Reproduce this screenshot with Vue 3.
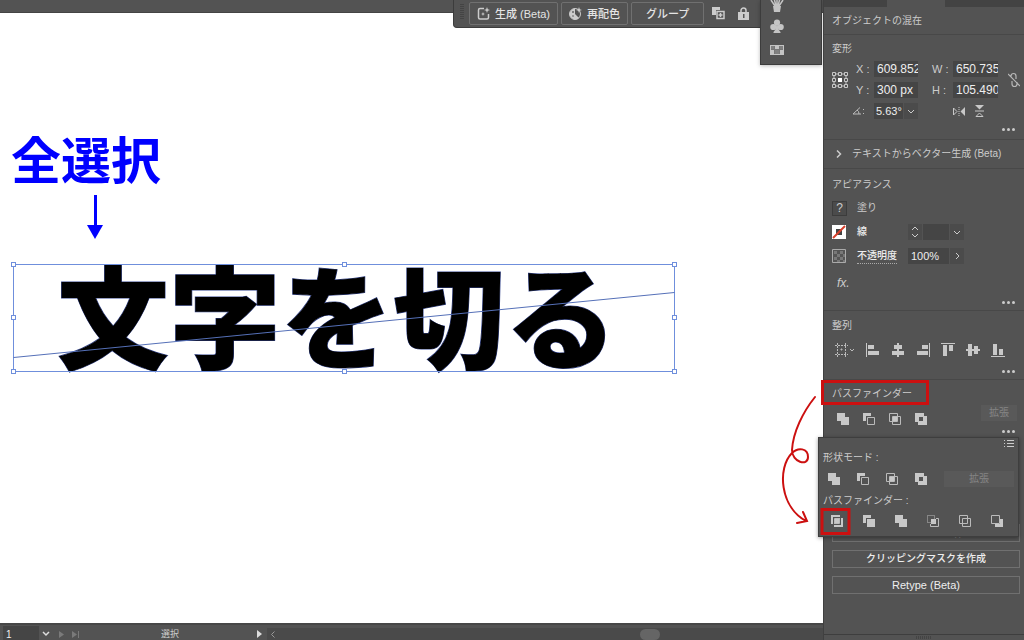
<script setup>
import { ref } from 'vue'

const x = ref('609.852')
const y = ref('300 px')
const w = ref('650.735')
const h = ref('105.490')
const angle = ref('5.63°')
const opacity = ref('100%')
const stroke = ref('')
const artboard = ref('1')

const handles = [[1, 1], [332, 1], [662, 1], [1, 54], [662, 54], [1, 108], [332, 108], [662, 108]]

const unite = { name: '合体', fill: 'M0 0h8v4h4v8H4V8H0z' }
const minusFront = { name: '前面オブジェクトで型抜き', fill: 'M0 0h8v3H3v5H0z', line: 'M4.5 4.5h7v7h-7z' }
const intersect = { name: '交差', fill: 'M4 4h4v4H4z', line: 'M.5 .5h8v8h-8zM3.5 3.5h8v8h-8z' }
const exclude = { name: '中マド', fill: 'M0 0h9v3h3v9H3V9H0zM4 4v4h4V4z' }
const shapeModes = [unite, minusFront, intersect, exclude]
const pathfinders = [
  { name: '分割', fill: 'M0 0h9v2H2v7H0zM4 4h4v4H4zM10 3h2v9H3v-2h7z', line: 'M3.5 9V3.5H9M8.5 3v5.500H3' },
  { name: '刈り込み', fill: 'M0 0h8v3H3v5H0zM4 4h8v8H4z' },
  { name: '合流', fill: 'M0 0h8v4h4v8H4V8H0z' },
  { name: '切り抜き', fill: 'M4 4h5v5H4z', dotted: 'M.5 .5h7v7h-7z', line: 'M9 3.5h2.500v8h-8V9' },
  { name: 'アウトライン', line: 'M.5 .5h8v8h-8zM3.5 3.5h8v8h-8z' },
  { name: '背面オブジェクトで型抜き', fill: 'M9 4h3v8H4V9h5z', line: 'M.5 .5h8v8h-8z' },
]
const aligns = [
  { name: '左揃え', d: 'M0 0h1v14H0zM2 2h6v4H2zM2 8h11v4H2z' },
  { name: '水平方向中央', d: 'M6 0h2v14H6zM3 2h8v4H3zM1 8h12v4H1z' },
  { name: '右揃え', d: 'M13 0h1v14h-1zM6 2h6v4H6zM1 8h11v4H1z' },
  { name: '上揃え', d: 'M0 0h14v1H0zM2 2h4v11H2zM8 2h4v6H8z' },
  { name: '垂直方向中央', d: 'M0 6h14v2H0zM2 1h4v12H2zM8 3h4v8H8z' },
  { name: '下揃え', d: 'M0 13h14v1H0zM2 1h4v11H2zM8 6h4v6H8z' },
]
</script>

<template>
  <div class="app">
    <main>
      <div class="topstrip"></div>
      <div class="canvas">
        <h1 class="note">全選択</h1>
        <svg class="down" width="16" height="44" viewBox="0 0 16 44">
          <path d="M8.500 0v32" stroke="#00f" stroke-width="3" />
          <path d="M0 30h16L8 44z" fill="#00f" />
        </svg>
        <p class="art">文字を切る</p>
        <svg class="selection" width="668" height="114" viewBox="0 0 668 114">
          <g fill="none" stroke="#6f8fdc">
            <path d="M3.500 3.500h661v107h-661z" />
            <path d="M3.500 96.500L664.500 31.500" stroke="#5570b8" />
          </g>
          <g fill="#fff" stroke="#6f8fdc">
            <rect v-for="p in handles" :key="p.join()" :x="p[0] + 0.5" :y="p[1] + 0.5" width="4" height="4" />
          </g>
        </svg>
      </div>

      <div class="taskbar">
        <i class="grip"></i>
        <button>
          <svg width="13" height="13" viewBox="0 0 13 13" fill="none" stroke="#ccc">
            <path d="M7 1.500H3Q1.500 1.500 1.500 3v7.500Q1.500 12 3 12h7q1.500 0 1.500-1.500V7" stroke-width="1.500" />
            <path d="M10 0l.8 2.200L13 3l-2.200.8L10 6l-.8-2.200L7 3l2.200-.8zM6 5l.6 1.400L8 7l-1.400.6L6 9l-.6-1.400L4 7l1.400-.6z" fill="#ccc" stroke="none" />
          </svg>
          生成 (Beta)
        </button>
        <button>
          <svg width="13" height="13" viewBox="0 0 13 13">
            <circle cx="6" cy="7" r="5.500" fill="none" stroke="#ccc" />
            <path d="M6 1.500a5.500 5.500 0 1 0 4 9.500L6 7z" fill="#ccc" />
            <circle cx="4" cy="5" r="1" fill="#666" /><circle cx="4" cy="9" r="1" fill="#888" />
            <path d="M10 0l.8 2.200L13 3l-2.200.8L10 6l-.8-2.200L7 3l2.200-.8z" fill="#ccc" />
          </svg>
          再配色
        </button>
        <button class="plain">グループ</button>
        <button class="ico" aria-label="複製">
          <svg width="13" height="13" viewBox="0 0 13 13">
            <path d="M0 0h8v3H4v5H0z" fill="#ccc" />
            <path d="M5 4.500h7v7H5zM8.500 6v4M6.500 8h4" fill="none" stroke="#ccc" stroke-width="1.500" />
          </svg>
        </button>
        <button class="ico" aria-label="ロック">
          <svg width="11" height="13" viewBox="0 0 11 13">
            <path d="M3 6V3.500a2.500 2.500 0 0 1 5 0V6" fill="none" stroke="#ccc" stroke-width="1.500" />
            <path d="M0 5h11v8H0z" fill="#ccc" />
            <path d="M5 7h1.500v4H5z" fill="#555" />
          </svg>
        </button>
      </div>

      <div class="dock">
        <svg width="14" height="12" viewBox="0 2 14 12" fill="#c4c4c4">
          <path d="M3 8h8l-1 6H4z" />
          <path d="M5 8L1 2M6 8L4 0M7 8V1M8 8l2-8M9 8l4-6" stroke="#c4c4c4" stroke-width="1.500" />
        </svg>
        <svg width="14" height="14" viewBox="0 0 14 14" fill="#c4c4c4">
          <circle cx="7" cy="3.500" r="3.100" /><circle cx="3.300" cy="8" r="3.100" /><circle cx="10.700" cy="8" r="3.100" />
          <path d="M6.300 5h1.400q0 5 2.800 8v1h-7v-1Q6.300 10 6.300 5z" />
        </svg>
        <svg width="14" height="10" viewBox="0 0 14 10">
          <path d="M0 0h14v10H0z" fill="#c4c4c4" />
          <path d="M1 1h3v3H1zM10 1h3v3h-3zM5 5h4v4H5z" fill="#808080" />
          <path d="M4.500 1v8M9.500 1v8M1 4.500h12" stroke="#777" />
        </svg>
      </div>

      <footer>
        <label class="page"><input v-model="artboard" aria-label="アートボード" /></label>
        <button aria-label="アートボード一覧"><svg width="8" height="6" viewBox="0 0 8 6"><path d="M1 1l3 3 3-3" fill="none" stroke="#ddd" stroke-width="1.500" /></svg></button>
        <button class="next" aria-label="次へ"><svg width="5" height="7" viewBox="0 0 5 7"><path d="M0 0l5 3.500L0 7z" fill="#7a7a7a" /></svg></button>
        <button class="last" aria-label="最後へ"><svg width="7" height="7" viewBox="0 0 7 7"><path d="M0 0l5 3.500L0 7zM6 0h1v7H6z" fill="#7a7a7a" /></svg></button>
        <span class="tool">選択</span>
        <button aria-label="表示"><svg width="5" height="8" viewBox="0 0 5 8"><path d="M0 0l5 4-5 4z" fill="#ddd" /></svg></button>
        <div class="scroll">
          <svg width="4" height="7" viewBox="0 0 4 7"><path d="M3.500 .5l-3 3 3 3" fill="none" stroke="#999" /></svg>
          <i></i>
        </div>
      </footer>
    </main>

    <aside>
      <div class="tabs"><i></i></div>
      <h2 class="title">オブジェクトの混在</h2>

      <section class="transform">
        <h3>変形</h3>
        <div class="fields">
          <svg class="ref" width="16" height="16" viewBox="0 0 16 16" fill="none" stroke="#c8c8c8">
            <path d="M4 2h2M10 2h2M4 14h2M10 14h2M2 4v2M2 10v2M14 4v2M14 10v2" />
            <path d="M.5 .5h3v3h-3zM6.500 .5h3v3h-3zM12.500 .5h3v3h-3zM.5 6.500h3v3h-3zM12.500 6.500h3v3h-3zM.5 12.500h3v3h-3zM6.500 12.500h3v3h-3zM12.500 12.500h3v3h-3z" />
            <path d="M6 6h4v4H6z" fill="#fff" stroke="none" />
          </svg>
          <label for="fx">X :</label><input id="fx" v-model="x" />
          <label for="fw">W :</label><input id="fw" v-model="w" />
          <svg class="link" width="12" height="16" viewBox="0 0 12 16" fill="none" stroke="#b8b8b8" stroke-width="1.200">
            <path d="M3 6V4a2.500 2.500 0 0 1 5 0v3M4 9v3a2.500 2.500 0 0 0 5 0v-2M0 2l12 12" />
          </svg>
          <label for="fy">Y :</label><input id="fy" v-model="y" />
          <label for="fh">H :</label><input id="fh" v-model="h" />
          <label for="fa" aria-label="角度"><svg width="13" height="8" viewBox="0 0 13 8" fill="none" stroke="#bbb"><path d="M8 .5L1 7h8M5 3q2 1 2 4" /><path d="M11.500 2v1M11.500 6v1" /></svg></label>
          <div class="combo">
            <input id="fa" v-model="angle" />
            <button aria-label="角度を選択"><svg width="8" height="5" viewBox="0 0 8 5"><path d="M1 1l3 3 3-3" fill="none" stroke="#ccc" /></svg></button>
          </div>
          <div class="flip">
            <button aria-label="水平方向に反転"><svg width="12" height="9" viewBox="0 0 12 9"><path d="M.5 1v7L4 4.500z" fill="none" stroke="#c8c8c8" /><path d="M12 0v9L7.500 4.500z" fill="#c8c8c8" /><path d="M6 0v9" stroke="#c8c8c8" stroke-dasharray="1 1" /></svg></button>
            <button aria-label="垂直方向に反転"><svg width="9" height="12" viewBox="0 0 9 12"><path d="M0 0h9L4.500 4.500z" fill="#c8c8c8" /><path d="M1 11.500h7L4.500 8z" fill="none" stroke="#c8c8c8" /><path d="M0 6h9" stroke="#c8c8c8" /></svg></button>
          </div>
        </div>
        <button class="more" aria-label="詳細オプション"><i></i><i></i><i></i></button>
      </section>

      <section class="vector">
        <button>
          <svg width="6" height="8" viewBox="0 0 6 8"><path d="M1 .5L4.500 4 1 7.500" fill="none" stroke="#ccc" stroke-width="1.500" /></svg>
          テキストからベクター生成 (Beta)
        </button>
      </section>

      <section class="appearance">
        <h3>アピアランス</h3>
        <div class="row">
          <button class="unknown" aria-label="塗りの色">?</button>
          <span>塗り</span>
        </div>
        <div class="row">
          <svg width="14" height="14" viewBox="0 0 14 14"><path d="M0 0h14v14H0z" fill="#fff" /><path d="M4 4h6v6H4z" fill="#444" /><path d="M1 13L13 1" stroke="#d8402c" stroke-width="2" /></svg>
          <label class="strong" for="st">線</label>
          <div class="combo">
            <button aria-label="線幅の増減"><svg width="8" height="12" viewBox="0 0 8 12"><path d="M1 4l3-3 3 3M1 8l3 3 3-3" fill="none" stroke="#ccc" /></svg></button>
            <input id="st" v-model="stroke" />
            <button aria-label="線幅を選択"><svg width="8" height="5" viewBox="0 0 8 5"><path d="M1 1l3 3 3-3" fill="none" stroke="#ccc" /></svg></button>
          </div>
        </div>
        <div class="row">
          <svg width="14" height="14" viewBox="0 0 14 14"><path d="M.5 .5h13v13H.5z" fill="#555" stroke="#aaa" /><path d="M2 2h3v3H2zM8 2h3v3H8zM5 5h3v3H5zM11 5h2v3h-2zM2 8h3v3H2zM8 8h3v3H8zM5 11h3v2H5zM11 11h2v2h-2z" fill="#787878" /></svg>
          <label class="strong under" for="op">不透明度</label>
          <div class="combo wide">
            <input id="op" v-model="opacity" />
            <button aria-label="不透明度を変更"><svg width="5" height="8" viewBox="0 0 5 8"><path d="M1 1l3 3-3 3" fill="none" stroke="#ccc" /></svg></button>
          </div>
        </div>
        <button class="effect">fx.</button>
        <button class="more" aria-label="アピアランスパネル"><i></i><i></i><i></i></button>
      </section>

      <section class="align">
        <h3>整列</h3>
        <div class="icons">
          <button aria-label="整列の基準">
            <svg width="20" height="14" viewBox="0 0 20 14" fill="none" stroke="#bbb"><path d="M2.500 0v14M10.500 0v14M0 2.500h13M0 11.500h13" stroke-dasharray="2 1" /><path d="M6 6h1v1H6zM15 6l2 2 2-2" /></svg>
          </button>
          <button v-for="a in aligns" :key="a.name" :aria-label="a.name">
            <svg width="14" height="14" viewBox="0 0 14 14"><path :d="a.d" fill="#c8c8c8" /></svg>
          </button>
        </div>
        <button class="more" aria-label="整列パネル"><i></i><i></i><i></i></button>
      </section>

      <section class="pathfinder">
        <h3>パスファインダー</h3>
        <div class="icons">
          <button v-for="i in shapeModes" :key="i.name" :aria-label="i.name">
            <svg class="pf" width="12" height="12" viewBox="0 0 12 12"><path v-if="i.fill" class="fill" :d="i.fill" /><path v-if="i.line" class="line" :d="i.line" /></svg>
          </button>
          <button class="expand" disabled>拡張</button>
        </div>
        <button class="more" aria-label="パスファインダーパネル"><i></i><i></i><i></i></button>
      </section>

      <section class="quick">
        <button>オブジェクトを一括選択</button>
        <button>クリッピングマスクを作成</button>
        <button>Retype (Beta)</button>
      </section>
      <div class="handle"><i class="grip"></i></div>

      <div class="popup">
        <button class="menu" aria-label="パネルメニュー"><svg width="10" height="8" viewBox="0 0 10 8"><path d="M0 .5h1M3 .5h7M0 3.500h1M3 3.500h7M0 6.500h1M3 6.500h7" stroke="#ccc" /></svg></button>
        <h3>形状モード :</h3>
        <div class="icons modes">
          <button v-for="i in shapeModes" :key="i.name" :aria-label="i.name">
            <svg class="pf" width="12" height="12" viewBox="0 0 12 12"><path v-if="i.fill" class="fill" :d="i.fill" /><path v-if="i.line" class="line" :d="i.line" /></svg>
          </button>
          <button class="expand" disabled>拡張</button>
        </div>
        <h3>パスファインダー :</h3>
        <div class="icons finders">
          <button v-for="i in pathfinders" :key="i.name" :aria-label="i.name">
            <svg class="pf" width="12" height="12" viewBox="0 0 12 12"><path v-if="i.fill" class="fill" :d="i.fill" /><path v-if="i.line" class="line" :d="i.line" /><path v-if="i.dotted" class="line dotted" :d="i.dotted" /></svg>
          </button>
        </div>
      </div>

      <!-- red marks over the panel -->
      <svg class="marks" width="154" height="164" viewBox="776 376 154 164" fill="none" stroke="#cc1010">
        <path d="M822.500 381.500h105v22h-105zM822 509.500h27v24h-27z" stroke-width="3" />
        <path d="M815 397C803 412 793 432 792 450C792 462 808 467 808 457C808 448 798 447 792 453C777 468 780 507 806 521M803 512L807 521L797 523" stroke-width="2" stroke-linecap="round" />
      </svg>
    </aside>
  </div>
</template>

<style>
body {
  margin: 0;
}
</style>

<style scoped>
.app {
  display: flex;
  height: 100vh;
  overflow: hidden;
  background: #fff;
  color: #ccc;
  font: 10px/14px "Liberation Sans", "Noto Sans CJK JP", sans-serif;
}
h1, h2, h3, p {
  margin: 0;
  font-weight: 400;
}
h2, h3 {
  font-size: 10px;
}
button, input {
  box-sizing: border-box;
  margin: 0;
  padding: 0;
  border: 0;
  background: none;
  color: inherit;
  font: inherit;
}
button {
  display: flex;
  align-items: center;
  justify-content: center;
}
svg {
  display: block;
  flex: none;
}
main {
  position: relative;
  flex: 1;
  min-width: 0;
  display: flex;
  flex-direction: column;
}
.topstrip {
  height: 12px;
  background: #535353;
  border-bottom: 1px solid #444;
}
.canvas {
  position: relative;
  flex: 1;
}
.note {
  position: absolute;
  left: 11px;
  top: 108px;
  font: 700 50px/72px "Noto Sans CJK JP", sans-serif;
  color: #00f;
  white-space: nowrap;
}
.down {
  position: absolute;
  left: 87px;
  top: 182px;
}
.art {
  position: absolute;
  left: 57px;
  top: 219px;
  font: 900 112px/160px "Noto Sans CJK JP", sans-serif;
  color: #000;
  -webkit-text-stroke: 1px #33448c;
  paint-order: stroke fill;
  white-space: nowrap;
}
.selection {
  position: absolute;
  left: 10px;
  top: 248px;
}
.taskbar {
  position: absolute;
  top: 0;
  right: 2px;
  width: 368px;
  height: 28px;
  box-sizing: border-box;
  display: flex;
  align-items: flex-start;
  gap: 3px;
  padding: 2px 0 0 6px;
  background: #535353;
  border: 1px solid #3c3c3c;
  border-top: 0;
  border-radius: 0 0 0 4px;
  color: #e4e4e4;
  font-size: 11px;
  font-weight: 500;
}
.grip {
  width: 4px;
  height: 16px;
  background: repeating-linear-gradient(#444 0 1px, transparent 1px 2px);
}
.taskbar .grip {
  margin: 2px 2px 0 0;
}
.taskbar button {
  height: 23px;
  padding: 0 7px;
  gap: 5px;
  border: 1px solid #707070;
  border-radius: 2px;
}
.taskbar .plain {
  padding: 0 14px;
}
.taskbar .ico {
  border: 0;
  padding: 0 5px;
}
.dock {
  position: absolute;
  top: 0;
  right: 1px;
  width: 62px;
  height: 65px;
  box-sizing: border-box;
  display: flex;
  flex-direction: column;
  gap: 7px;
  padding: 0 9px;
  background: #535353;
  border: 1px solid #3c3c3c;
  border-top: 0;
  box-shadow: 0 1px 4px #0004;
}
.dock svg + svg + svg {
  margin-top: 5px;
}
footer {
  height: 17px;
  box-sizing: border-box;
  display: flex;
  align-items: center;
  padding-top: 3px;
  background: #535353;
  border-top: 2px solid #474747;
}
.page {
  width: 36px;
  margin-left: 3px;
  background: #484848;
}
.page input {
  width: 100%;
  padding-left: 3px;
  color: #eee;
  display: block;
}
footer button {
  width: 14px;
}
footer .next {
  margin-left: 1px;
}
.tool {
  margin-left: 79px;
  width: 91px;
  font-size: 9px;
}
.scroll {
  flex: 1;
  display: flex;
  align-items: center;
  align-self: stretch;
  margin-left: 1px;
  padding-left: 4px;
  background: #4a4a4a;
}
.scroll i {
  width: 20px;
  height: 11px;
  margin-left: auto;
  margin-right: 163px;
  border-radius: 6px;
  background: #656565;
}
aside {
  position: relative;
  width: 201px;
  box-sizing: border-box;
  display: flex;
  flex-direction: column;
  background: #535353;
  border-left: 1px solid #404040;
}
.tabs {
  height: 7px;
  background: #434343;
}
.tabs i {
  display: block;
  width: 58px;
  height: 7px;
  margin-left: 63px;
  background: #535353;
}
.title {
  padding: 7px 8px 6px;
}
section {
  position: relative;
  box-sizing: border-box;
  padding: 0 4px 0 8px;
  border-top: 1px solid #484848;
}
.transform {
  height: 105px;
  padding-top: 7px;
}
.fields {
  display: grid;
  grid-template-columns: 24px 18px 44px 35px 45px 1fr;
  grid-auto-rows: 16px;
  row-gap: 5px;
  align-items: center;
  margin-top: 5px;
  font-size: 11px;
}
.fields input {
  font-size: 12px;
}
.ref {
  grid-row: span 2;
}
.link {
  grid-row: 1 / 3;
  grid-column: 6;
  justify-self: end;
}
.fields label[for="fw"],
.fields label[for="fh"] {
  padding-left: 14px;
}
input {
  width: 100%;
  min-width: 0;
  height: 16px;
  padding-left: 3px;
  background: #454545;
  color: #eee;
}
.fields label[for="fa"] {
  grid-column: 1 / 3;
  padding-left: 20px;
}
.combo {
  display: flex;
  gap: 1px;
  width: 44px;
}
.combo button {
  width: 14px;
  flex: none;
  background: #4b4b4b;
}
.combo #fa {
  padding-left: 2px;
  font-size: 11px;
}
.flip {
  grid-column: 4 / 7;
  display: flex;
  gap: 10px;
  align-items: center;
  padding-left: 35px;
}
.more {
  position: absolute;
  right: 9px;
  bottom: 8px;
  gap: 2px;
}
.more i {
  width: 3px;
  height: 3px;
  border-radius: 2px;
  background: #ccc;
}
.vector {
  height: 29px;
}
.vector button {
  height: 28px;
  gap: 10px;
  padding-left: 4px;
  white-space: nowrap;
}
.appearance {
  height: 142px;
  padding-top: 9px;
}
.row {
  display: grid;
  grid-template-columns: 25px 51px 1fr;
  align-items: center;
  height: 24px;
}
.appearance h3 + .row {
  margin-top: 4px;
}
.unknown {
  width: 15px;
  height: 15px;
  border: 1px solid #3c3c3c;
  background: #4b4b4b;
  font-size: 12px;
}
.strong {
  color: #eee;
  font-weight: 500;
}
.under {
  justify-self: start;
  border-bottom: 1px dotted #aaa;
}
.row .combo {
  width: 56px;
}
.combo.wide {
  font-size: 11px;
}
.effect {
  margin-top: 8px;
  padding-left: 5px;
  font-size: 12px;
  font-style: italic;
}
.appearance .more,
.align .more {
  bottom: 6px;
}
.align {
  height: 69px;
  padding-top: 8px;
}
.icons {
  display: flex;
  align-items: center;
}
.align .icons {
  gap: 11px;
  margin-top: 10px;
  padding-left: 3px;
}
.pathfinder {
  height: 65px;
  padding-top: 7px;
}
.pathfinder .icons {
  gap: 14px;
  margin-top: 7px;
  padding: 0 0 0 5px;
}
.pathfinder .expand {
  width: 36px;
  height: 16px;
  margin: -8px 3px 0 auto;
}
.pathfinder .icons button:not(.expand) {
  margin-top: 5px;
}
.expand {
  background: #595959;
  color: #858585;
}
.pathfinder .more {
  bottom: 11px;
}
.pf .fill {
  fill: #c8c8c8;
  fill-rule: evenodd;
}
.pf .line {
  fill: none;
  stroke: #bbb;
}
.pf .dotted {
  stroke-dasharray: 1 1;
}
.quick {
  display: flex;
  flex-direction: column;
  gap: 8px;
  margin-top: auto;
  margin-bottom: 40px;
  border: 0;
}
.quick button {
  height: 18px;
  border: 1px solid #707070;
  color: #eee;
  font-weight: 500;
}
.quick button:last-child {
  font-size: 11px;
}
.handle {
  display: flex;
  justify-content: center;
  height: 6px;
  border-top: 1px solid #3e3e3e;
  box-sizing: border-box;
}
.handle .grip {
  width: 16px;
  height: 3px;
  margin-top: 1px;
  background: repeating-linear-gradient(90deg, #444 0 1px, transparent 1px 2px);
}
.popup {
  position: absolute;
  top: 437px;
  left: -6px;
  right: 5px;
  height: 100px;
  box-sizing: border-box;
  padding: 13px 4px 0;
  background: #535353;
  border: 1px solid #3e3e3e;
  box-shadow: 0 1px 4px #0006;
}
.menu {
  position: absolute;
  top: 2px;
  right: 4px;
}
.modes {
  gap: 17px;
  height: 16px;
  margin: 6px 0 7px 5px;
}
.modes .expand {
  width: 74px;
  height: 16px;
  margin-left: auto;
}
.finders {
  gap: 20px;
  margin: 7px 0 0 8px;
}
.marks {
  position: absolute;
  left: -48px;
  top: 376px;
}
</style>
